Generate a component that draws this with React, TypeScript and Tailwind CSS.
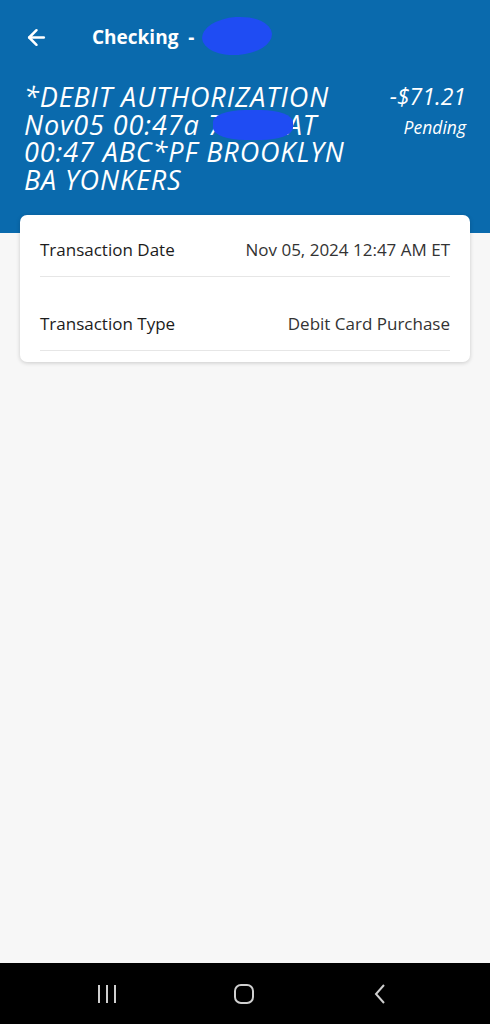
import { ArrowLeft } from 'lucide-react';

const font = { fontFamily: '"Open Sans", "Liberation Sans", sans-serif' };

const Blob = ({ className }: { className: string }) => (
  <span className={`absolute bg-[#1f4cf3] ${className}`} />
);

const Row = ({ label, value, top }: { label: string; value: string; top: string }) => (
  <div className={`${top} pb-[15px] border-b border-[#e6e6e6] flex items-center justify-between`}>
    <span className="text-[17px] leading-[22px] text-[#1c1c1c]">{label}</span>
    <span className="text-[17px] leading-[22px] text-[#333]">{value}</span>
  </div>
);

export default function App() {
  return (
    <div className="w-[490px] h-[1024px] bg-[#f7f7f7] flex flex-col" style={font}>
      <div className="bg-[#0a6aad] h-[233px] px-6 text-white shrink-0">
        <div className="h-[74px] flex items-center">
          <ArrowLeft size={25} strokeWidth={2.4} />
          <div className="relative ml-[43px] text-[19px] font-bold">
            Checking &nbsp;-
            <Blob className="left-[110px] top-[-6px] w-[70px] h-[38px] rounded-[50%] rotate-[-4deg]" />
          </div>
        </div>
        <div className="flex justify-between mt-[9px]">
          <div className="relative text-[27px] italic leading-[27.5px] tracking-[0.9px]">
            <div>*DEBIT AUTHORIZATION</div>
            <div>Nov05 00:47a 7 &nbsp; &nbsp; &nbsp; &nbsp;AT</div>
            <div>00:47 ABC*PF BROOKLYN</div>
            <div>BA YONKERS</div>
            <Blob className="left-[189px] top-[27px] w-[80px] h-[30px] rounded-[40%]" />
          </div>
          <div className="flex flex-col items-end">
            <span className="text-[23px] italic leading-[27px]">-$71.21</span>
            <span className="text-[17.5px] italic mt-[4px]">Pending</span>
          </div>
        </div>
      </div>
      <div className="mx-5 -mt-[18px] bg-white rounded-[7px] shadow-[0_1px_4px_rgba(0,0,0,0.18)] px-5 pb-[11px]">
        <Row label="Transaction Date" value="Nov 05, 2024 12:47 AM ET" top="pt-[24px]" />
        <Row label="Transaction Type" value="Debit Card Purchase" top="pt-[36px]" />
      </div>
      <div className="flex-1" />
      <div className="h-[61px] bg-black flex items-center pl-[96px] shrink-0">
        <svg width="22" height="22" viewBox="0 0 22 22" className="text-[#cfcfcf]">
          <path d="M3 2v18M11 2v18M19 2v18" stroke="currentColor" strokeWidth="2" />
        </svg>
        <svg width="24" height="24" viewBox="0 0 24 24" className="text-[#cfcfcf] ml-[114px]">
          <rect x="3" y="3" width="18" height="18" rx="6" fill="none" stroke="currentColor" strokeWidth="2" />
        </svg>
        <svg width="18" height="24" viewBox="0 0 18 24" className="text-[#cfcfcf] ml-[115px]">
          <path d="M13 3 L5 12 L13 21" fill="none" stroke="currentColor" strokeWidth="2" />
        </svg>
      </div>
    </div>
  );
}
